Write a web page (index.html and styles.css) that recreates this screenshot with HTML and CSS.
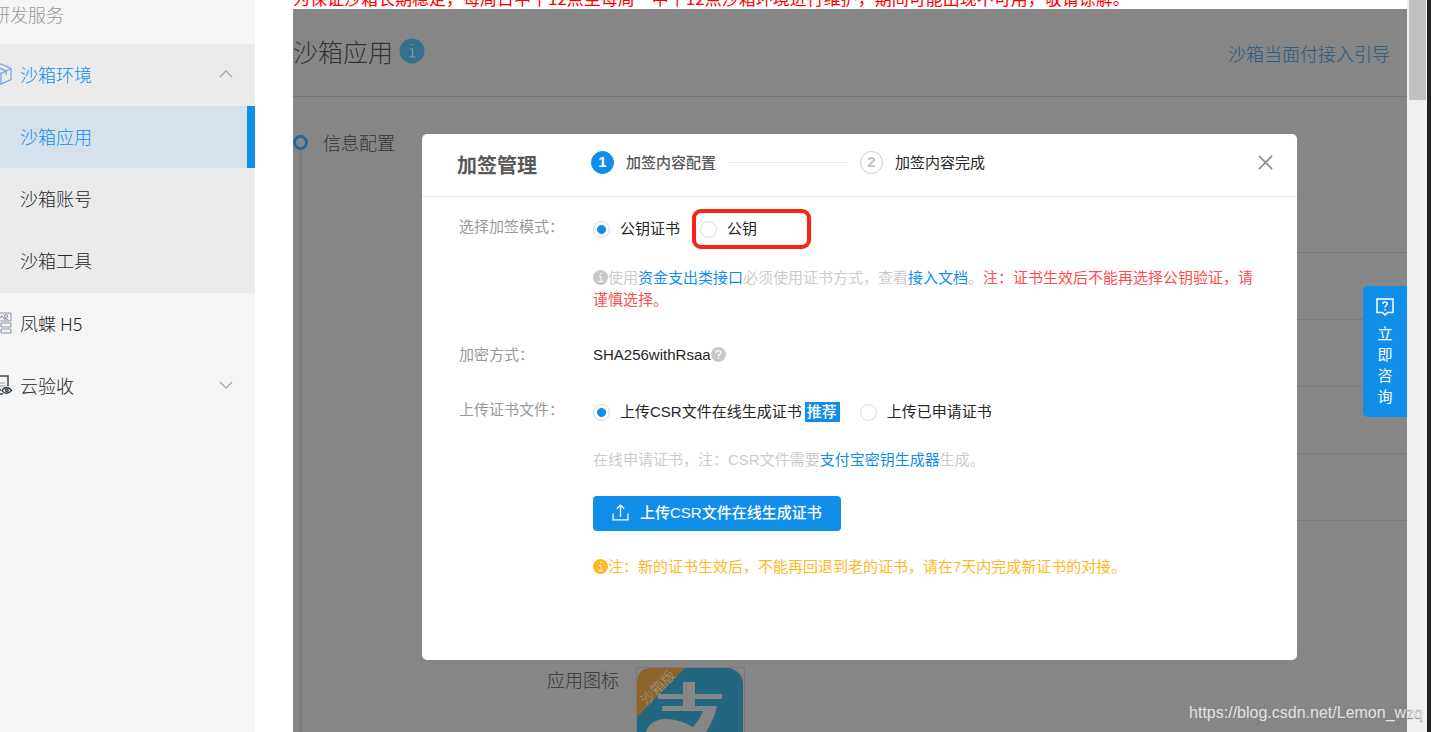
FILE: index.html
```html
<!DOCTYPE html>
<html lang="zh-CN">
<head>
<meta charset="utf-8">
<title>沙箱应用</title>
<link rel="stylesheet" href="styles.css">
</head>
<body>
<div class="app">
  <nav class="sidebar">
    <div class="nav-title">研发服务</div>
    <div class="nav-group">
      <a class="nav-item current" href="#">
        <svg class="nav-icon" viewBox="0 0 22 22" fill="none" stroke="#6f9fee" stroke-width="1.2"><path d="M11 1 21 5.500V16.500L11 21 1 16.500V5.500zM1 5.500 11 10.500 21 5.500M11 10.500V21M6 3.300 16 8.200V12"/></svg>
        <span>沙箱环境</span>
        <svg class="chevron" viewBox="0 0 14 8" fill="none" stroke="#a6a6b2" stroke-width="1.300"><path d="M1 7 7 1 13 7"/></svg>
      </a>
      <a class="nav-item active" href="#">沙箱应用</a>
      <a class="nav-item" href="#">沙箱账号</a>
      <a class="nav-item" href="#">沙箱工具</a>
    </div>
    <a class="nav-item" href="#">
      <svg class="nav-icon" viewBox="0 0 22 22" fill="none" stroke="#8c93a8" stroke-width="1.100"><rect x="1" y="1" width="20" height="8" rx="1"/><path d="M8 8 12 4 15 8M15 6 18 8"/><circle cx="16" cy="4" r="1.500"/><rect x="1" y="11" width="8" height="4" rx="1" stroke="#e3a765"/><rect x="11" y="11" width="10" height="4" rx="1"/><rect x="1" y="17" width="8" height="4" rx="1" stroke="#e3a765"/><rect x="11" y="17" width="10" height="4" rx="1"/></svg>
      <span>凤蝶 H5</span>
    </a>
    <a class="nav-item" href="#">
      <svg class="nav-icon" viewBox="0 0 22 22" fill="none" stroke="#3f4654" stroke-width="1.500"><path d="M2 2H18V12M2 2V16H11M7 20H13"/><path d="M9 9H15M9 12H15" stroke="#b5b9c4"/><path d="M12 16.500C14 12.500 19 12.500 21.500 16.500 19 20 14 20 12 16.500z"/><circle cx="16.800" cy="16.300" r="1.300"/></svg>
      <span>云验收</span>
      <svg class="chevron" viewBox="0 0 14 8" fill="none" stroke="#a6a6b2" stroke-width="1.300"><path d="M1 1 7 7 13 1"/></svg>
    </a>
  </nav>

  <main class="main">
    <p class="notice">为保证沙箱长期稳定，每周日中午12点至每周一中午12点沙箱环境进行维护，期间可能出现不可用，敬请谅解。</p>
    <section class="page">
      <header class="page-head">
        <h1>沙箱应用</h1>
        <svg class="page-info" viewBox="0 0 26 26"><circle cx="13" cy="13" r="12.500" fill="#32708d"/><path d="M12.200 6.500h1.600M10.500 11h3v8M10 19h6.500" fill="none" stroke="#8a9da5" stroke-width="1.200"/></svg>
        <a class="guide" href="#">沙箱当面付接入引导</a>
      </header>
      <div class="page-body">
        <div class="timeline"><span class="dot"></span><span class="rail"></span></div>
        <h2>信息配置</h2>
        <div class="details">
          <div class="line first"></div>
          <div class="line"></div>
          <div class="line"></div>
          <div class="line"></div>
          <div class="line"></div>
          <div class="app-icon">
            <span>应用图标</span>
            <svg viewBox="0 0 109 109" role="img" aria-label="支付宝沙箱版">
              <rect x=".5" y=".5" width="108" height="108" fill="none" stroke="#7a7a7a"/>
              <rect x="1" y="1" width="106" height="106" rx="16" fill="#22677f"/>
              <path d="M1 50V16Q1 1 16 1H49z" fill="#8b652c"/>
              <path d="M47 15H59V27H86V32H59V39H81C79 49 74 59 69 67 82 74 95 79 107 81V94C90 90 76 84 62 76 46 96 8 98 9 70 11 48 36 48 57 60 62 54 65 49 67 44H26V39H47V32H22V27H47z" fill="#868686"/>
              <text class="ribbon" x="-20" y="35" transform="rotate(-45)">沙箱版</text>
            </svg>
          </div>
        </div>
      </div>

      <div class="overlay">
        <div class="modal" role="dialog" aria-labelledby="dialog-title">
          <header class="modal-head">
            <h3 id="dialog-title">加签管理</h3>
            <ol class="steps">
              <li class="step on"><b>1</b><span>加签内容配置</span></li>
              <li class="step-line"></li>
              <li class="step"><b>2</b><span>加签内容完成</span></li>
            </ol>
            <button class="close" aria-label="关闭"><svg viewBox="0 0 16 16" fill="none" stroke="#8c8c8c" stroke-width="1.700"><path d="M1 1 15 15M15 1 1 15"/></svg></button>
          </header>
          <form class="form">
            <div class="label">选择加签模式：</div>
            <div class="field mode">
              <div class="radios">
                <label><input type="radio" name="mode" checked><span>公钥证书</span></label>
                <label class="marked"><input type="radio" name="mode"><span>公钥</span></label>
              </div>
              <p class="hint"><svg class="mark" viewBox="0 0 15 15"><circle cx="7.500" cy="7.500" r="7.500" fill="#c8c8c8"/><path d="M7 3.500h1.500M6 6.500h2v5M5.500 11.500h4.500" fill="none" stroke="#fff"/></svg>使用<a href="#">资金支出类接口</a>必须使用证书方式，查看<a href="#">接入文档</a>。<em>注：证书生效后不能再选择公钥验证，请谨慎选择。</em></p>
            </div>

            <div class="label">加密方式：</div>
            <div class="field algo">SHA256withRsaa<svg class="mark" viewBox="0 0 15 15"><circle cx="7.500" cy="7.500" r="7.500" fill="#c8c8c8"/><path d="M5 6C5 2.700 10 2.700 10 5.700 10 7.300 7.500 7.300 7.500 9.300M7.500 10.500V12" fill="none" stroke="#fff" stroke-width="1.200"/></svg></div>

            <div class="label">上传证书文件：</div>
            <div class="field upload">
              <div class="radios">
                <label><input type="radio" name="file" checked><span>上传CSR文件在线生成证书</span><strong class="tag">推荐</strong></label>
                <label><input type="radio" name="file"><span>上传已申请证书</span></label>
              </div>
              <p class="hint">在线申请证书，注：CSR文件需要<a href="#">支付宝密钥生成器</a>生成。</p>
              <button type="button" class="primary"><svg viewBox="0 0 16 16" fill="none" stroke="#fff" stroke-width="1.200"><path d="M1 9V15H15V9M8 12V1M4.500 4.500 8 1 11.500 4.500"/></svg>上传CSR文件在线生成证书</button>
              <p class="hint warn"><svg class="mark" viewBox="0 0 15 15"><circle cx="7.500" cy="7.500" r="7.500" fill="#ffb81f"/><path d="M7 3.500h1.500M6 6.500h2v5M5.500 11.500h4.500" fill="none" stroke="#fff"/></svg>注：新的证书生效后，不能再回退到老的证书，请在7天内完成新证书的对接。</p>
            </div>
          </form>
        </div>
      </div>

      <button class="consult">
        <svg viewBox="0 0 18 18" fill="none" stroke="#fff" stroke-width="1.500"><path d="M1 1H17V14.500H11.500L9 17 6.500 14.500H1z"/><path d="M6.800 6C6.800 3.300 11.200 3.300 11.200 5.800 11.200 7.500 9 7.500 9 9.500M9 11V12.500"/></svg>
        <span>立</span><span>即</span><span>咨</span><span>询</span>
      </button>
    </section>
  </main>
  <div class="scrollbar"><div class="thumb"></div></div>
  <div class="edge"></div>
  <div class="watermark">https://blog.csdn.net/Lemon_wzq</div>
</div>
</body>
</html>
```
FILE: styles.css
```css
* { box-sizing: border-box; margin: 0; padding: 0; }
body { font-family: "Liberation Sans", "Noto Sans CJK SC", sans-serif; font-size: 15px; color: #262626; background: #fff; }
a { color: #108ee9; text-decoration: none; }
button { font: inherit; border: 0; cursor: pointer; }
svg { display: block; flex: none; }
.app { position: relative; display: flex; height: 100vh; overflow: hidden; }

/* sidebar */
.sidebar { flex: none; width: 255px; background: #f5f5f5; font-family: "Noto Sans CJK SC", sans-serif; font-size: 18px; font-weight: 300; }
.nav-title { height: 44px; margin-left: -8px; line-height: 28px; color: #999; }
.nav-group { background: #ebebeb; padding-bottom: 1px; }
.nav-item { display: flex; align-items: center; height: 62px; padding: 0 22px 2px 20px; color: #262626; }
.nav-icon { width: 22px; height: 22px; margin: 0 8px 0 -30px; }
.chevron { width: 14px; height: 8px; margin-left: auto; }
.current { color: #108ee9; }
.active { color: #108ee9; background: #d5e1eb; border-right: 8px solid #108ee9; }

/* page behind the dialog */
.main { flex: 1; min-width: 0; display: flex; flex-direction: column; margin-left: 38px; }
.notice { display: flex; align-items: flex-end; height: 9px; overflow: hidden; font: 17px/22px "Noto Sans CJK SC", sans-serif; color: #f00; white-space: nowrap; }
.page { position: relative; flex: 1; min-height: 0; background: #868686; font-family: "Noto Sans CJK SC", sans-serif; overflow: hidden; }
.page-head { display: flex; align-items: center; height: 88px; padding: 0 17px 3px 0; border-bottom: 1px solid #757575; }
.page-head h1 { font-size: 25px; font-weight: 300; color: #333; }
.page-info { width: 26px; height: 26px; margin-left: 6px; }
.guide { margin-left: auto; padding-top: 3px; font-size: 18px; font-weight: 300; color: #27597f; }
.page-body { display: flex; height: 640px; }
.timeline { display: flex; flex-direction: column; align-items: center; width: 15px; padding-top: 38px; }
.dot { flex: none; width: 15px; height: 15px; border: 3px solid #2a6594; border-radius: 50%; }
.rail { flex: 1; width: 3px; background: #7c7c7c; }
.page-body h2 { width: 224px; padding: 31px 0 0 15px; font-size: 18px; font-weight: 300; line-height: 28px; color: #333; }
.details { flex: 1; margin-left: 15px; }
.line { height: 67px; border-bottom: 1px solid #7a7a7a; }
.first { height: 156px; }
.app-icon { display: flex; align-items: flex-start; gap: 17px; padding-top: 146px; font-size: 18px; font-weight: 300; line-height: 24px; color: #333; }
.app-icon svg { width: 109px; height: 109px; }
.ribbon { font-size: 14px; fill: #a39b8e; }

/* dialog */
.overlay { position: absolute; inset: 0; padding: 125px 110px 0 129px; font-family: "Liberation Sans", "Noto Sans CJK SC", sans-serif; }
.modal { background: #fff; border-radius: 5px; padding-bottom: 82px; }
.modal-head { display: flex; align-items: center; height: 63px; padding: 0 24px 5px 35px; border-bottom: 1px solid #e6e6e6; }
.modal-head h3 { width: 134px; padding-top: 4px; font-size: 20px; font-weight: 700; color: #595959; }
.steps { display: flex; align-items: center; gap: 12px; list-style: none; }
.step { display: flex; align-items: center; gap: 12px; }
.step span { padding-bottom: 3px; }
.step b { width: 23px; height: 23px; border: 1px solid #ccc; border-radius: 50%; color: #c4c4c4; line-height: 20px; text-align: center; }
.on { color: #595959; font-weight: 500; }
.on b { background: #108ee9; border-color: #108ee9; color: #fff; }
.step-line { width: 120px; height: 1px; background: #e6e6e6; }
.close { display: flex; margin-left: auto; background: none; }
.close svg { width: 15px; height: 15px; }
.form { display: grid; grid-template-columns: 134px 1fr; padding: 17px 35px 0 37px; line-height: 22px; }
.label { padding-top: 2px; color: #999; }
.field { font-weight: 400; }
.radios { display: flex; align-items: center; gap: 20px; height: 30px; }
.radios label { display: flex; align-items: center; }
.radios input { appearance: none; flex: none; width: 17px; height: 17px; margin-right: 10px; border: 1px solid #d9d9d9; border-radius: 50%; background: #fff; }
.radios input:checked { background: radial-gradient(circle, #108ee9 4px, #fff 5px); }
.radios span { padding-bottom: 1px; }
.marked { outline: 4px solid #ff2213; outline-offset: 4px; border-radius: 1px; height: 24px; padding-right: 46px; }
.hint { color: #ccc; }
.hint em { font-style: normal; color: #ff4d4f; }
.hint .mark, .algo .mark { display: inline-block; width: 15px; height: 15px; vertical-align: -2px; }
.mode .hint { margin-top: 23px; }
.label:has(+ .algo) { padding-top: 33px; }
.algo { padding: 33px 0 31px; }
.tag { margin-left: 3px; padding: 0 3px 0 2px; background: #108ee9; color: #fff; font-weight: 500; line-height: 20px; }
.upload .hint { margin-top: 22px; }
.primary { display: flex; align-items: center; gap: 11px; height: 35px; margin-top: 25px; padding: 0 19px 2px; border-radius: 4px; background: #108ee9; color: #fff; font-weight: 500; }
.primary svg { width: 17px; height: 17px; }
.upload .warn { margin-top: 25px; color: #ffb81f; }

/* floating tab, scrollbar and window edge */
.consult { position: absolute; top: 277px; right: 0; display: flex; flex-direction: column; align-items: center; width: 44px; padding: 12px 0 11px; border-radius: 5px 0 0 5px; background: #108ee9; color: #fff; line-height: 21px; }
.consult svg { width: 18px; height: 18px; margin-bottom: 6px; }
.scrollbar { flex: none; width: 20px; padding: 0 1px 0 2px; background: #f0f0f0; }
.thumb { height: 100px; background: #c1c1c1; }
.edge { flex: none; width: 4px; background: #222; }
.watermark { position: absolute; right: 8px; bottom: 10px; font-size: 16px; line-height: 18px; color: #e2e2e2; text-shadow: 0 1px 1px #888; }
```
